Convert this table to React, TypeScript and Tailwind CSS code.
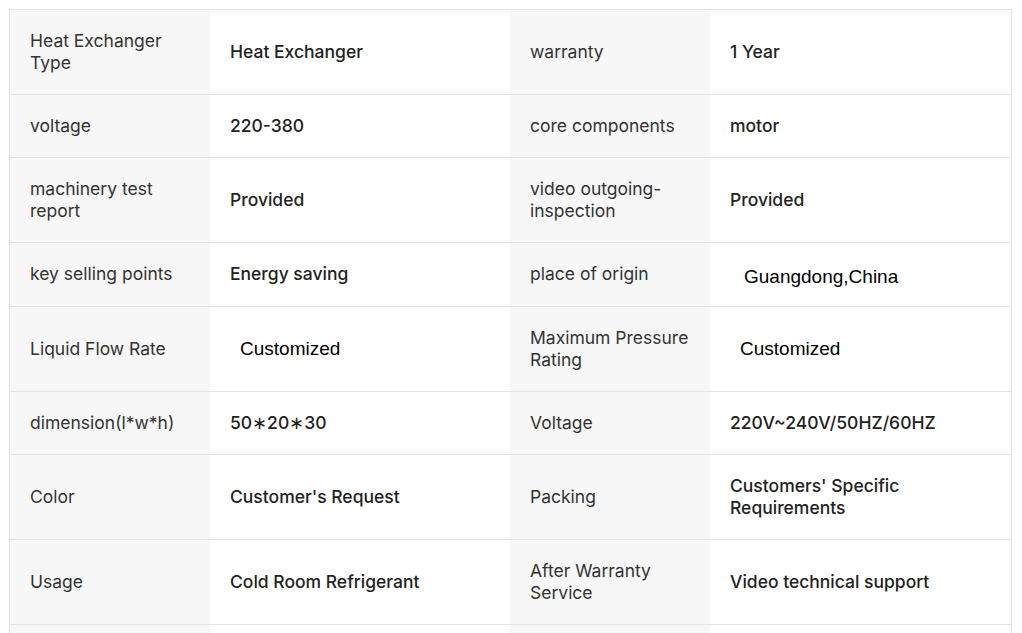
const rows: { l1: string; v1: string; l2: string; v2: string; a1?: boolean; a2?: boolean }[] = [
  { l1: "Heat Exchanger Type", v1: "Heat Exchanger", l2: "warranty", v2: "1 Year" },
  { l1: "voltage", v1: "220-380", l2: "core components", v2: "motor" },
  { l1: "machinery test report", v1: "Provided", l2: "video outgoing-inspection", v2: "Provided" },
  { l1: "key selling points", v1: "Energy saving", l2: "place of origin", v2: "Guangdong,China", a2: true },
  { l1: "Liquid Flow Rate", v1: "Customized", l2: "Maximum Pressure Rating", v2: "Customized", a1: true, a2: true },
  { l1: "dimension(l*w*h)", v1: "50∗20∗30", l2: "Voltage", v2: "220V~240V/50HZ/60HZ" },
  { l1: "Color", v1: "Customer's Request", l2: "Packing", v2: "Customers' Specific Requirements" },
  { l1: "Usage", v1: "Cold Room Refrigerant", l2: "After Warranty Service", v2: "Video technical support" },
  { l1: "Weight", v1: "Customized", l2: "Refrigerant", v2: "R404A" },
];

export default function App() {
  return (
    <div className="min-h-screen bg-white p-[9px] font-['Inter',sans-serif] text-[17.5px]">
      <div className="w-[1003px] border border-[#e3e3e3]">
        {rows.map((r, i) => (
          <div
            key={i}
            className={`grid grid-cols-[200px_300px_200px_301px] ${i > 0 ? "border-t border-[#e3e3e3]" : ""}`}
          >
            <Label text={r.l1} />
            <Value text={r.v1} arial={r.a1} />
            <Label text={r.l2} />
            <Value text={r.v2} arial={r.a2} wide={r.a2 && !r.a1} />
          </div>
        ))}
      </div>
    </div>
  );
}

function Label({ text }: { text: string }) {
  return (
    <div className="flex items-center bg-[#f7f7f7] py-5 pl-5 pr-3 leading-[22.1px] text-[#333333]">
      {text}
    </div>
  );
}

function Value({ text, arial, wide }: { text: string; arial?: boolean; wide?: boolean }) {
  if (arial) {
    return (
      <div className="flex items-center py-5 pl-5 pr-6 leading-[22.1px]">
        <span
          className={`${wide ? "relative top-[3px] pl-[14px]" : "pl-[10px]"} font-['Liberation_Sans',Arial,sans-serif] text-[19px] text-black`}
        >
          {text}
        </span>
      </div>
    );
  }
  return (
    <div className="flex items-center py-5 pl-5 pr-6 font-medium leading-[22.1px] text-[#222222]">
      {text}
    </div>
  );
}
